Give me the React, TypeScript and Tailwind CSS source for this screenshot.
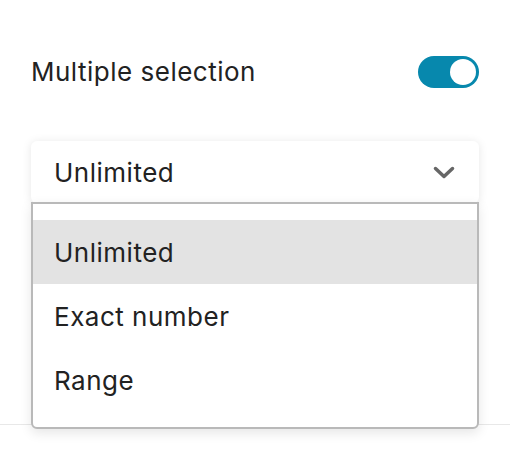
import { useState } from "react";

const options = ["Unlimited", "Exact number", "Range"];

function Chevron() {
  return (
    <svg width="22" height="13" viewBox="0 0 22 13" fill="none">
      <polyline
        points="2.5,2.5 11,10.5 19.5,2.5"
        stroke="#666666"
        strokeWidth="3.5"
        strokeLinecap="round"
        strokeLinejoin="round"
      />
    </svg>
  );
}

export default function App() {
  const [multiple, setMultiple] = useState(true);
  const [value, setValue] = useState("Unlimited");

  return (
    <div className="w-[510px] h-[456px] bg-white font-['Inter',sans-serif] text-[#222] tracking-[0.5px] overflow-hidden">
      <div className="px-[31px] pt-[56px]">
        <div className="flex items-center justify-between h-8">
          <span className="text-[26px] leading-8">Multiple selection</span>
          <button
            onClick={() => setMultiple(!multiple)}
            className={`w-[61px] h-8 rounded-full p-[3px] flex ${multiple ? "justify-end bg-[#0788ad]" : "justify-start bg-[#c4c4c4]"}`}
          >
            <span className="w-[26px] h-[26px] rounded-full bg-white" />
          </button>
        </div>

        <div className="relative mt-[53px]">
          <div className="h-[62px] rounded-[6px] bg-white shadow-[0_1px_10px_rgba(0,0,0,0.10)] flex items-center justify-between pl-[23px] pr-[24px]">
            <span className="text-[26px] pt-[1px]">{value}</span>
            <Chevron />
          </div>

          {/* open menu */}
          <div className="absolute left-0 right-0 top-[61px] z-10 border-2 border-[#b9b9b9] rounded-b-[6px] bg-white pt-[16px] pb-[15px] shadow-[0_4px_12px_rgba(0,0,0,0.10)]">
            {options.map((o) => (
              <div
                key={o}
                onClick={() => setValue(o)}
                className={`h-16 flex items-center pl-[21px] text-[26px] ${o === value ? "bg-[#e3e3e3]" : ""}`}
              >
                {o}
              </div>
            ))}
          </div>
        </div>
      </div>
      <div className="mt-[221px] h-px bg-[#e8e8e8]" />
    </div>
  );
}
